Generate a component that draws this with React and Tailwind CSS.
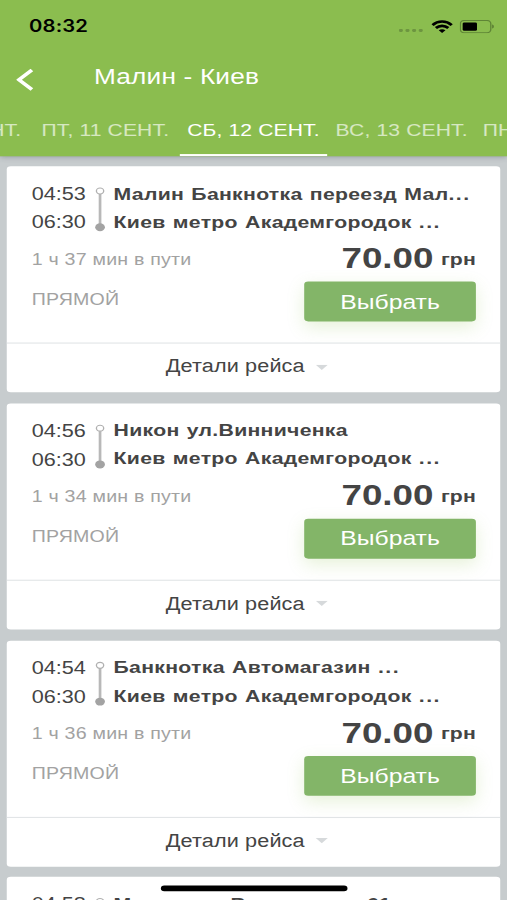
const tabs = ['ЧТ, 10 СЕНТ.', 'ПТ, 11 СЕНТ.', 'СБ, 12 СЕНТ.', 'ВС, 13 СЕНТ.', 'ПН, 14 СЕНТ.']

const trips = [
  { id: 1, start: '04:53', end: '06:30', from: 'Малин Банкнотка переезд Мал', fromCut: true, to: 'Киев метро Академгородок ', duration: '1 ч 37 мин в пути' },
  { id: 2, start: '04:56', end: '06:30', from: 'Никон ул.Винниченка', fromCut: false, to: 'Киев метро Академгородок ', duration: '1 ч 34 мин в пути' },
  { id: 3, start: '04:54', end: '06:30', from: 'Банкнотка Автомагазин ', fromCut: true, to: 'Киев метро Академгородок ', duration: '1 ч 36 мин в пути' },
  { id: 4, start: '04:58', end: '06:30', from: 'Малин ул. Винниченка 61', fromCut: false, to: 'Киев метро Академгородок ', duration: '1 ч 32 мин в пути' },
]

function StatusBar() {
  return (
    <div className="flex h-[47px] items-center justify-between pl-[21.5px] pr-[9px] text-black">
      <span className="pt-[1.5px] font-[Inter,sans-serif] text-[15px] font-semibold tracking-[0.1px]">08:32</span>
      <div className="flex items-center">
        <svg className="mt-[7px] mr-[6px]" width="18" height="3" viewBox="0 0 18 3" fill="#6d9540">
          <rect y="0.2" width="3" height="2.6" rx="1" />
          <rect x="4.9" y="0.2" width="3" height="2.6" rx="1" />
          <rect x="9.8" y="0.2" width="3" height="2.6" rx="1" />
          <rect x="14.7" y="0.2" width="3" height="2.6" rx="1" />
        </svg>
        <svg width="16" height="12" viewBox="0 0 16 12" fill="none" stroke="#000" strokeWidth="2.3">
          <path d="M0.9 4.6C4.9 0.4 11.1 0.4 15.1 4.6" />
          <path d="M3.4 7.3C6.1 4.7 9.9 4.7 12.6 7.3" />
          <path d="M5.5 9.3C7 8 9 8 10.5 9.3L8 11.8Z" fill="#000" stroke="none" />
        </svg>
        <svg className="ml-[5px]" width="26" height="12" viewBox="0 0 26 12">
          <rect x="0.5" y="0.5" width="22.5" height="11" rx="2.8" fill="none" stroke="#5f8536" />
          <rect x="2.2" y="2.2" width="10.6" height="7.6" rx="1.2" fill="#000" />
          <path d="M24.2 4.2C25.4 4.6 25.4 7.4 24.2 7.8Z" fill="#48652a" />
        </svg>
      </div>
    </div>
  )
}

function Header() {
  return (
    <header className="relative z-10 h-[141px] shrink-0 bg-[#8bbd4f] shadow-[0_1px_5px_rgba(60,70,90,0.45)]">
      <StatusBar />
      <div className="flex h-[46px] items-center pl-[11.5px] text-white">
        <svg className="mt-[3px]" width="13" height="20" viewBox="0 0 13 20" fill="none" stroke="#fff" strokeWidth="2.9">
          <path d="M11.6 1.2L2 10L11.6 18.8" />
        </svg>
        <h1 className="ml-[45px] text-[19.4px] leading-none tracking-[0.14px]">Малин - Киев</h1>
      </div>
      <nav className="h-[48px] overflow-hidden">
        <div className="-ml-[86.5px] flex h-full w-[548px]">
          {tabs.map((tab, i) => (
            <div
              key={tab}
              className={`flex h-full w-[109.6px] shrink-0 items-center justify-center border-b-[2.5px] pt-[4px] text-[15.6px] tracking-[0.1px] whitespace-nowrap ${
                i === 2 ? 'border-white text-white' : 'border-transparent text-white/65'
              }`}
            >
              {tab}
            </div>
          ))}
        </div>
      </nav>
    </header>
  )
}

function Dots() {
  return <span className="tracking-[1.1px]">...</span>
}

function TripCard({ trip }) {
  return (
    <article className="h-[204px] shrink-0 overflow-hidden rounded-[3px] bg-white text-[#444]">
      <div className="h-[160px] border-b border-[#e2e5e7] pt-[12px] pr-[18px] pl-[18.5px]">
        <div className="flex text-[16px] leading-[26px]">
          <div className="w-[46.5px]">
            <p>{trip.start}</p>
            <p>{trip.end}</p>
          </div>
          <svg className="mt-[6px] h-[42px] w-[10px]" viewBox="0 0 10 42" fill="none">
            <path d="M4 7V34" stroke="#b8b8b8" strokeWidth="2" />
            <circle cx="4" cy="4.3" r="2.7" stroke="#b0b0b0" strokeWidth="1" />
            <circle cx="4" cy="37" r="3.6" fill="#a3a3a3" />
          </svg>
          <div className="-mt-[0.4px] ml-[4px] text-[15.7px] font-bold tracking-[0.22px] whitespace-pre [word-spacing:0.8px]">
            <p>{trip.from}{trip.fromCut && <Dots />}</p>
            <p>{trip.to}<Dots /></p>
          </div>
        </div>
        <div className="flex justify-between">
          <div className="text-[14.5px] text-[#a2a2a2]">
            <p className="mt-[10px] leading-[20px] tracking-[0.15px]">{trip.duration}</p>
            <p className="mt-[16px] leading-[20px] tracking-[0.1px]">ПРЯМОЙ</p>
          </div>
          <div className="w-[127px]">
            <p className="flex h-[40px] items-baseline justify-end pt-px text-[27.2px] leading-[36px] font-bold whitespace-nowrap">
              70.00<span className="relative -top-[3px] ml-[5.5px] text-[15.7px] tracking-[0.1px]">грн</span>
            </p>
            <button className="block h-[36px] w-full rounded-[3px] bg-[#83b568] text-[18.3px] leading-[33px] text-white shadow-[0_5px_14px_rgba(139,189,79,0.22)]">
              Выбрать
            </button>
          </div>
        </div>
      </div>
      <div className="flex h-[43px] items-center justify-center pr-[9px] pb-px text-[16px] tracking-[0.1px]">
        Детали рейса
        <svg className="ml-[8px]" width="10" height="5" viewBox="0 0 10 5" fill="#d6d9db">
          <path d="M0.5 0H9.5L5 4.8Z" />
        </svg>
      </div>
    </article>
  )
}

export default function App() {
  return (
    <div className="h-[900px] w-[507px] overflow-hidden">
      <div className="relative flex h-[812px] w-[375px] origin-top-left scale-x-[1.352] scale-y-[1.1084] flex-col overflow-hidden bg-[#c7ccce] font-['Liberation_Sans',Arial,sans-serif]">
        <Header />
        <main className="flex flex-col gap-[9.8px] px-[5px] pt-[9px]">
          {trips.map((trip) => (
            <TripCard key={trip.id} trip={trip} />
          ))}
        </main>
        <div className="absolute bottom-[8px] left-[119px] h-[5px] w-[138px] rounded-full bg-black" />
      </div>
    </div>
  )
}
